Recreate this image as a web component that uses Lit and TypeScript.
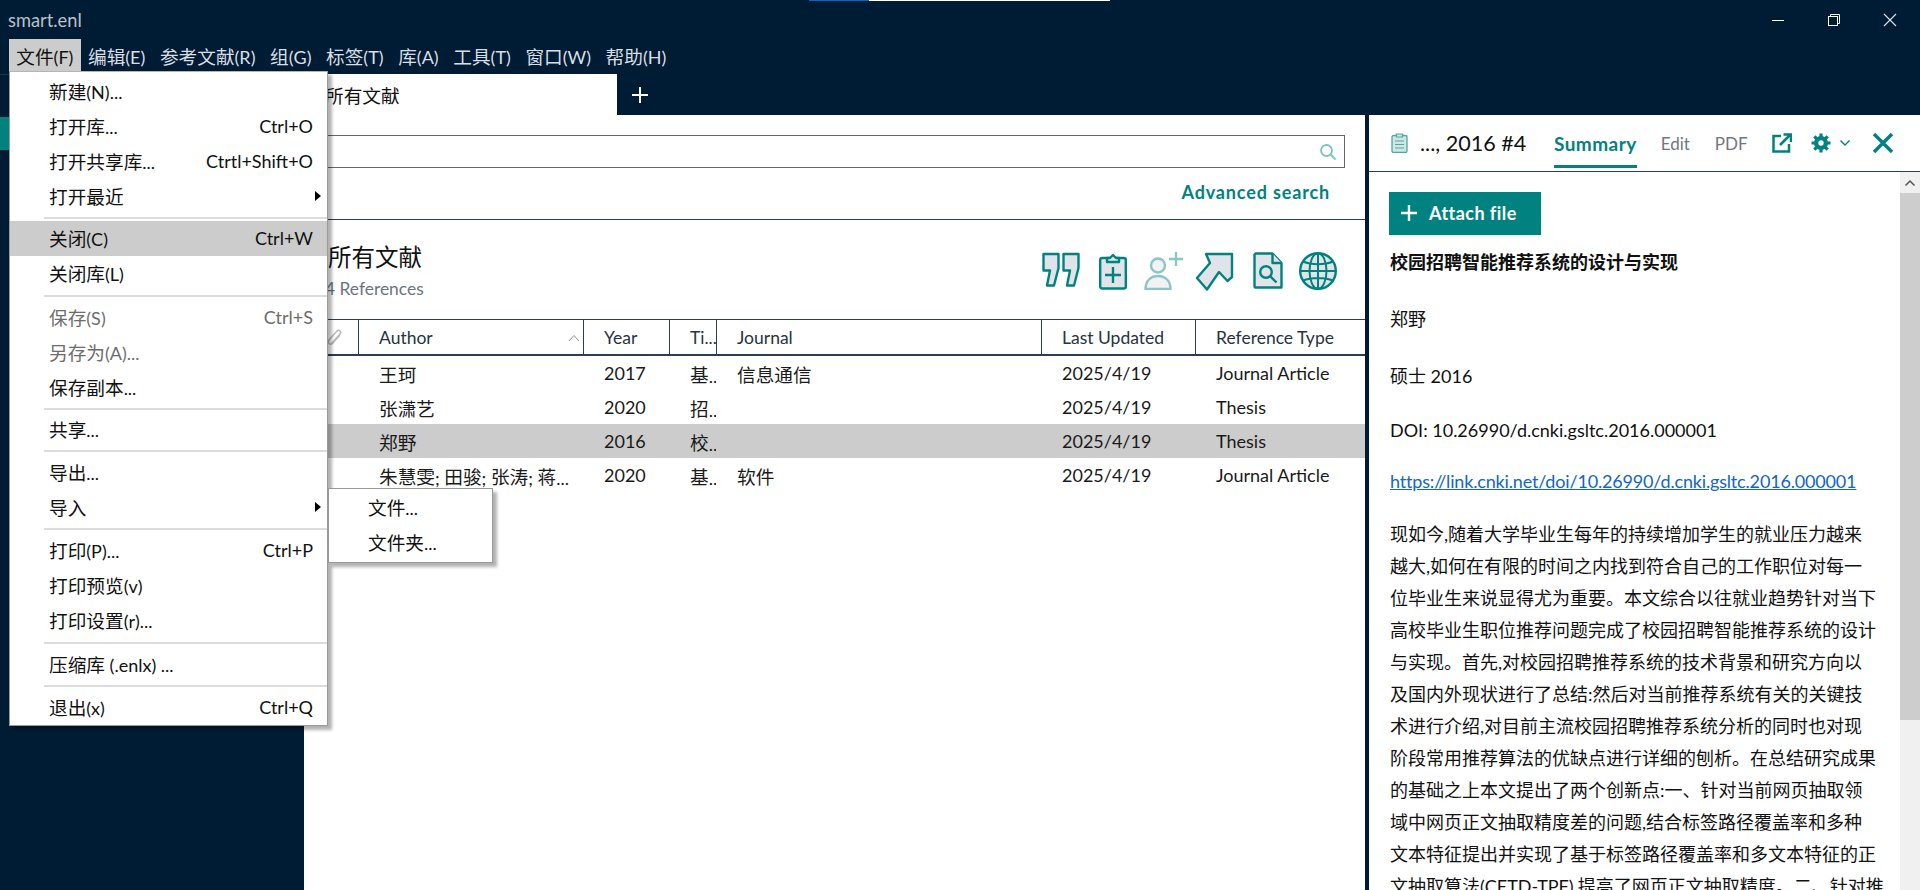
import { LitElement, html, css } from "lit";
import { customElement } from "lit/decorators.js";

type Row = { t?: string; k?: string; arrow?: boolean; dis?: boolean; hot?: boolean; sep?: number };
const MENU: Row[] = [
  { t: "新建(N)..." }, { t: "打开库...", k: "Ctrl+O" }, { t: "打开共享库...", k: "Ctrtl+Shift+O" }, { t: "打开最近", arrow: true },
  { sep: 7 },
  { t: "关闭(C)", k: "Ctrl+W", hot: true }, { t: "关闭库(L)" },
  { sep: 9 },
  { t: "保存(S)", k: "Ctrl+S", dis: true }, { t: "另存为(A)...", dis: true }, { t: "保存副本..." },
  { sep: 7 },
  { t: "共享..." },
  { sep: 8 },
  { t: "导出..." }, { t: "导入", arrow: true },
  { sep: 8 },
  { t: "打印(P)...", k: "Ctrl+P" }, { t: "打印预览(v)" }, { t: "打印设置(r)..." },
  { sep: 9 },
  { t: "压缩库 (.enlx) ..." },
  { sep: 8 },
  { t: "退出(x)", k: "Ctrl+Q" },
];
const TOP = ["文件(F)", "编辑(E)", "参考文献(R)", "组(G)", "标签(T)", "库(A)", "工具(T)", "窗口(W)", "帮助(H)"];
const REFS = [
  ["王珂", "2017", "基..", "信息通信", "2025/4/19", "Journal Article"],
  ["张潇艺", "2020", "招..", "", "2025/4/19", "Thesis"],
  ["郑野", "2016", "校..", "", "2025/4/19", "Thesis"],
  ["朱慧雯; 田骏; 张涛; 蒋...", "2020", "基..", "软件", "2025/4/19", "Journal Article"],
];
const ABSTRACT = [
  "现如今,随着大学毕业生每年的持续增加学生的就业压力越来",
  "越大,如何在有限的时间之内找到符合自己的工作职位对每一",
  "位毕业生来说显得尤为重要。本文综合以往就业趋势针对当下",
  "高校毕业生职位推荐问题完成了校园招聘智能推荐系统的设计",
  "与实现。首先,对校园招聘推荐系统的技术背景和研究方向以",
  "及国内外现状进行了总结:然后对当前推荐系统有关的关键技",
  "术进行介绍,对目前主流校园招聘推荐系统分析的同时也对现",
  "阶段常用推荐算法的优缺点进行详细的刨析。在总结研究成果",
  "的基础之上本文提出了两个创新点:一、针对当前网页抽取领",
  "域中网页正文抽取精度差的问题,结合标签路径覆盖率和多种",
  "文本特征提出并实现了基于标签路径覆盖率和多文本特征的正",
  "文抽取算法(CETD-TPF),提高了网页正文抽取精度。二、针对推",
];

const mix = (s: string) =>
  html`<span>${s.split(/([\u3400-\u9fff]+)/).map((p, i) => (i % 2 ? html`<span class="cjk">${p}</span>` : p))}</span>`;

@customElement("app-root")
export class AppRoot extends LitElement {
  static styles = css`
    :host { display: block; width: 1920px; height: 890px; overflow: hidden; position: relative; background: #001c35;
      font-family: Lato, "Noto Sans CJK SC", sans-serif; font-size: 18px; color: #111; }
    * { box-sizing: border-box; }
    .cjk { font-size: 18.67px; }
    .strip { position: absolute; left: 809px; top: 0; width: 301px; height: 1px; display: flex; }
    .strip i { display: block; height: 1px; }
    .strip .b { width: 60px; background: #0a64c8; }
    .strip .w { flex: 1; background: #fff; }
    .title { height: 39px; display: flex; align-items: center; padding-left: 8px; color: #b9c1c9; font-size: 18.3px; }
    .wbtns { margin-left: auto; display: flex; padding-right: 2px; }
    .wbtn { width: 56px; height: 36px; display: flex; align-items: center; justify-content: center; }
    .mbar { height: 32px; display: flex; padding-left: 9px; color: #d9dee3; }
    .mi { height: 32px; padding: 0 7.3px; display: flex; align-items: center; white-space: nowrap; }
    .mi.on { background: #ccc; color: #111; }
    .tabs { margin-top: 3px; height: 41px; display: flex; align-items: stretch; }
    .tabs-l { width: 304px; border-top: 1px solid #1c3448; }
    .tab { width: 313px; background: #fff; padding-left: 21px; display: flex; align-items: center; white-space: nowrap; }
    .plus { width: 46px; display: flex; align-items: center; justify-content: center; }
    .body { display: flex; height: 775px; }
    .side { width: 304px; flex: none; padding-top: 2px; }
    .sel { width: 9px; height: 33px; background: #00827f; }
    .main { width: 1061px; flex: none; background: #fff; display: flex; flex-direction: column; }
    .searchwrap { padding: 20px 20px 0 0; }
    .search { height: 33px; border: 1px solid #666; border-left: 0; display: flex; align-items: center; justify-content: flex-end; padding-right: 7px; }
    .adv { height: 52px; border-bottom: 1px solid #2b3f50; display: flex; align-items: center; justify-content: flex-end; padding: 0 35px 3px 0; color: #00827f; font-weight: 700; font-size: 18px; letter-spacing: .85px; }
    .head { height: 99px; padding-left: 24px; display: flex; align-items: flex-start; }
    .h1 { font-size: 23.5px; line-height: 30px; margin-top: 22px; white-space: nowrap; }
    .sub { color: #6b7580; font-size: 17.4px; line-height: 22px; margin: 6px 0 0 -3px; white-space: nowrap; }
    .acts { margin-left: auto; display: flex; padding: 32px 28px 0 0; }
    .acts svg { display: block; }
    .act { fill: #e0e4e8; stroke: #00827f; stroke-width: 2.4; stroke-linejoin: round; }
    .line { fill: none; stroke: #00827f; stroke-width: 2.4; }
    .glb { fill: none; stroke: #00827f; stroke-width: 2; }
    .m19 { margin-right: 19px; }
    .m17 { margin-right: 17px; }
    .m18 { margin-right: 18px; }
    .m16 { margin-right: 16px; }
    .m11 { margin-right: 11px; }
    .faded { opacity: .45; }
    .grid { display: grid; grid-template-columns: 54px 225px 86px 47px 325px 154px 170px; }
    .gh { height: 37px; border-top: 1px solid #2b3f50; border-bottom: 2px solid #2b3f50; border-left: 1px solid #2b3f50; display: flex; align-items: center; padding: 1px 0 0 20px; color: #27333f; white-space: nowrap; overflow: hidden; font-size: 17.5px; }
    .gh:first-child { border-left: 0; }
    .caret { margin-left: auto; margin-right: 3px; }
    .clip { margin-left: 2px; }
    .gc { height: 34px; display: flex; align-items: center; padding-left: 21px; white-space: nowrap; overflow: hidden; color: #1a1a1a; }
    .gc .cjk { vertical-align: 1px; }
    .gc.hot { background: #ccc; }
    .div { width: 4px; flex: none; background: #001c35; }
    .detail { flex: 1; background: #fff; min-width: 0; display: flex; flex-direction: column; }
    .dbar { height: 57px; flex: none; border-bottom: 1px solid #2b3f50; display: flex; align-items: stretch; }
    .clipb { align-self: center; margin-left: 22px; margin-right: 12px; }
    .dtitle { font-size: 21.6px; display: flex; align-items: center; width: 134px; white-space: nowrap; }
    .dtab { display: flex; align-items: center; color: #6f7780; white-space: nowrap; position: relative; margin-right: 25px; font-size: 17px; }
    .dtab.on { color: #00827f; font-weight: 700; font-size: 19px; letter-spacing: .45px; margin-right: 24px; }
    .dtab.on::after { content: ""; position: absolute; left: 0; right: 0; bottom: 3px; height: 3px; background: #00827f; }
    .dtools { display: flex; align-items: center; margin-left: -1px; }
    .ml19 { margin-left: 19px; }
    .ml8 { margin-left: 8px; }
    .ml21 { margin-left: 21px; }
    .dbody { flex: 1; min-height: 0; display: flex; }
    .doc { flex: 1; padding: 20px 0 0 21px; overflow: hidden; }
    .attach { width: 152px; height: 43px; margin-left: -1px; background: #008380; color: #fff; font-weight: 700; display: flex; align-items: center; padding: 0 0 2px 11px; gap: 11px; letter-spacing: .45px; }
    .bold { font-weight: 700; line-height: 32px; margin-top: 11px; white-space: nowrap; }
    .ln { line-height: 32px; white-space: nowrap; }
    .g25 { margin-top: 25px; }
    .g22 { margin-top: 22px; }
    .g19 { margin-top: 19px; }
    .g21 { margin-top: 21px; }
    .a { color: #1266c4; text-decoration: underline; letter-spacing: -.17px; }
    .scroll { width: 20px; flex: none; background: #f0f0f0; display: flex; flex-direction: column; }
    .up { height: 21px; display: flex; align-items: center; justify-content: center; }
    .thumb { height: 527px; background: #cdcdcd; }
    .menu { position: absolute; left: 9px; top: 71px; width: 319px; height: 655px; background: #fff; border: 1px solid #9a9a9a; border-top-color: #b5b5b5; box-shadow: 4px 4px 3px rgba(0,0,0,.3); padding-top: 2px; }
    .row { height: 35px; display: flex; align-items: center; padding: 0 14px 2px 39px; white-space: nowrap; position: relative; color: #111; }
    .row.hot { background: #ccc; }
    .row.dis { color: #6d6d6d; }
    .row .k { margin-left: auto; }
    .arrow { position: absolute; right: 6px; top: 12px; width: 0; height: 0; border-left: 6px solid #000; border-top: 5.5px solid transparent; border-bottom: 5.5px solid transparent; }
    .sep { display: flex; align-items: center; padding-left: 34px; }
    .sep i { display: block; flex: 1; height: 2px; background: #dcdcdc; }
    .submenu { position: absolute; left: 328px; top: 488px; width: 165px; height: 75px; background: #fff; border: 1px solid #9a9a9a; box-shadow: 4px 4px 3px rgba(0,0,0,.3); padding-top: 1px; }
  `;

  icons() {
    return html`
      <svg class="m19" width="38" height="36" viewBox="0 0 38 36"><path class="act" d="M1.500 2h15v14l-4.500 17.500h-7l3-15h-6.500z"/><path class="act" d="M21.500 2h15v14l-4.500 17.500h-7l3-15h-6.500z"/></svg>
      <svg class="m17" width="28" height="38" viewBox="0 0 28 38"><rect class="act" x="1.200" y="6" width="25.600" height="30.500" rx="2"/><path class="act" d="M8 10V6h3l3-3 3 3h3v4z"/><path class="line" d="M14 15v16M6 23h16"/></svg>
      <svg class="m11 faded" width="40" height="38" viewBox="0 0 40 38"><circle class="act" cx="14" cy="13.500" r="7"/><path class="act" d="M1.500 37c0-8 5-13 12.500-13s12.500 5 12.500 13z"/><path class="line" d="M32 0v14M25 7h14"/></svg>
      <svg class="m18" width="40" height="40" viewBox="0 0 40 40"><path class="act" d="M11 2h26v23l-4.500 4-8.500-9L12 37.500 2 26l13-15z"/></svg>
      <svg class="m16" width="30" height="38" viewBox="0 0 30 38"><path class="act" d="M2.500 1.500h17l9 9.500v24.500h-26a1 1 0 0 1-1-1V2.500z"/><path class="act" d="M19.500 1.500v9.500h9"/><circle class="line" cx="13" cy="20" r="5.800"/><path class="line" d="M17.500 24.500l6 6"/></svg>
      <svg width="38" height="38" viewBox="0 0 38 38"><circle class="act" cx="19" cy="19" r="17.800"/><ellipse class="glb" cx="19" cy="19" rx="8.500" ry="17.800"/><path class="glb" d="M19 1v36M1.200 19h35.600M4 9.500c8 3.500 22 3.500 30 0M4 28.500c8-3.500 22-3.500 30 0"/></svg>`;
  }

  render() {
    return html`
      <div class="strip"><i class="b"></i><i class="w"></i></div>
      <div class="title">smart.enl
        <div class="wbtns">
          <div class="wbtn"><svg width="14" height="14" viewBox="0 0 14 14"><path d="M1 7.500h12" stroke="#fff" fill="none"/></svg></div>
          <div class="wbtn"><svg width="14" height="14" viewBox="0 0 14 14" fill="none" stroke="#fff"><rect x="1.500" y="3.500" width="9" height="9"/><path d="M3.500 3.500v-2h9v9h-2"/></svg></div>
          <div class="wbtn"><svg width="14" height="14" viewBox="0 0 14 14" fill="none" stroke="#dfe3e7" stroke-width="1.100"><path d="M1 1l12 12M13 1L1 13"/></svg></div>
        </div>
      </div>
      <div class="mbar">${TOP.map((m, i) => html`<div class="mi ${i === 0 ? "on" : ""}">${mix(m)}</div>`)}</div>
      <div class="tabs"><div class="tabs-l"></div><div class="tab">${mix("所有文献")}</div><div class="plus"><svg width="18" height="18" viewBox="0 0 18 18"><path d="M9 1v16M1 9h16" stroke="#fff" stroke-width="2" fill="none"/></svg></div></div>
      <div class="body">
        <div class="side"><div class="sel"></div></div>
        <div class="main">
          <div class="searchwrap"><div class="search"><svg width="18" height="18" viewBox="0 0 18 18" fill="none" stroke="#7fc2c0" stroke-width="1.800"><circle cx="7.500" cy="7.500" r="5.500"/><path d="M11.500 11.500l5 5"/></svg></div></div>
          <div class="adv">Advanced search</div>
          <div class="head">
            <div><div class="h1">所有文献</div><div class="sub">4 References</div></div>
            <div class="acts">${this.icons()}</div>
          </div>
          <div class="grid">
            <div class="gh"><svg class="clip" width="18" height="20" viewBox="0 0 18 20" fill="none" stroke="#b8bcc0" stroke-width="1.500"><path d="M5 16l9-10c2-2-1-5-3-3L3 12c-2 3 1 6 4 3l7-8"/></svg></div>
            <div class="gh">Author<svg class="caret" width="12" height="8" viewBox="0 0 12 8" fill="none" stroke="#8a9097"><path d="M1 7l5-5.500L11 7"/></svg></div>
            <div class="gh">Year</div><div class="gh">Ti...</div><div class="gh">Journal</div><div class="gh">Last Updated</div><div class="gh">Reference Type</div>
            ${REFS.map((r, i) => html`<div class="gc ${i === 2 ? "hot" : ""}"></div>${r.map((c) => html`<div class="gc ${i === 2 ? "hot" : ""}">${mix(c)}</div>`)}`)}
          </div>
        </div>
        <div class="div"></div>
        <div class="detail">
          <div class="dbar">
            <svg class="clipb" width="17" height="20" viewBox="0 0 17 20"><rect x="1" y="2.500" width="15" height="17" rx="1.500" fill="#cfe6e5" stroke="#4fa8a5" stroke-width="1.300"/><path d="M5.500 1h6v3h-6zM4 8h9M4 11.500h9M4 15h9" stroke="#4fa8a5" stroke-width="1.200" fill="#cfe6e5"/></svg>
            <div class="dtitle">..., 2016 #4</div>
            <div class="dtab on">Summary</div><div class="dtab">Edit</div><div class="dtab">PDF</div>
            <div class="dtools">
              <svg width="20" height="20" viewBox="0 0 20 20" fill="none" stroke="#00827f" stroke-width="2.500"><path d="M9 3H1.500v15.500H17V11"/><path d="M8 12L18 2M11.500 1.500h7.500V9"/></svg>
              <svg class="ml19" width="20" height="20" viewBox="0 0 20 20"><circle cx="10" cy="10" r="4.700" fill="none" stroke="#00827f" stroke-width="4.600"/><path d="M10 0.500v19M0.500 10h19M3.300 3.300l13.400 13.400M16.700 3.300L3.300 16.700" stroke="#00827f" stroke-width="3.200"/><circle cx="10" cy="10" r="2.700" fill="#fff"/></svg>
              <svg class="ml8" width="12" height="8" viewBox="0 0 12 8" fill="none" stroke="#00827f" stroke-width="1.400"><path d="M1.500 1.500L6 6l4.500-4.500"/></svg>
              <svg class="ml21" width="22" height="22" viewBox="0 0 22 22" fill="none" stroke="#00827f" stroke-width="3.400"><path d="M2 2l18 18M20 2L2 20"/></svg>
            </div>
          </div>
          <div class="dbody">
            <div class="doc">
              <div class="attach"><svg width="18" height="18" viewBox="0 0 18 18"><path d="M9 1v16M1 9h16" stroke="#fff" stroke-width="2.400" fill="none"/></svg>Attach file</div>
              <div class="bold">校园招聘智能推荐系统的设计与实现</div>
              <div class="ln g25">郑野</div>
              <div class="ln g25">硕士 2016</div>
              <div class="ln g22">DOI: 10.26990/d.cnki.gsltc.2016.000001</div>
              <div class="ln a g19">https://link.cnki.net/doi/10.26990/d.cnki.gsltc.2016.000001</div>
              <div class="g21">${ABSTRACT.map((l) => html`<div class="ln">${l}</div>`)}</div>
            </div>
            <div class="scroll">
              <div class="up"><svg width="12" height="8" viewBox="0 0 12 8" fill="none" stroke="#555" stroke-width="1.500"><path d="M1.500 6.500L6 2l4.500 4.500"/></svg></div>
              <div class="thumb"></div>
            </div>
          </div>
        </div>
      </div>
      <div class="menu">
        ${MENU.map((r) => r.sep
          ? html`<div class="sep" style="height:${r.sep}px"><i></i></div>`
          : html`<div class="row ${r.hot ? "hot" : ""} ${r.dis ? "dis" : ""}">${mix(r.t!)}${r.k ? html`<span class="k">${r.k}</span>` : ""}${r.arrow ? html`<span class="arrow"></span>` : ""}</div>`)}
      </div>
      <div class="submenu"><div class="row">${mix("文件...")}</div><div class="row">${mix("文件夹...")}</div></div>
    `;
  }
}
